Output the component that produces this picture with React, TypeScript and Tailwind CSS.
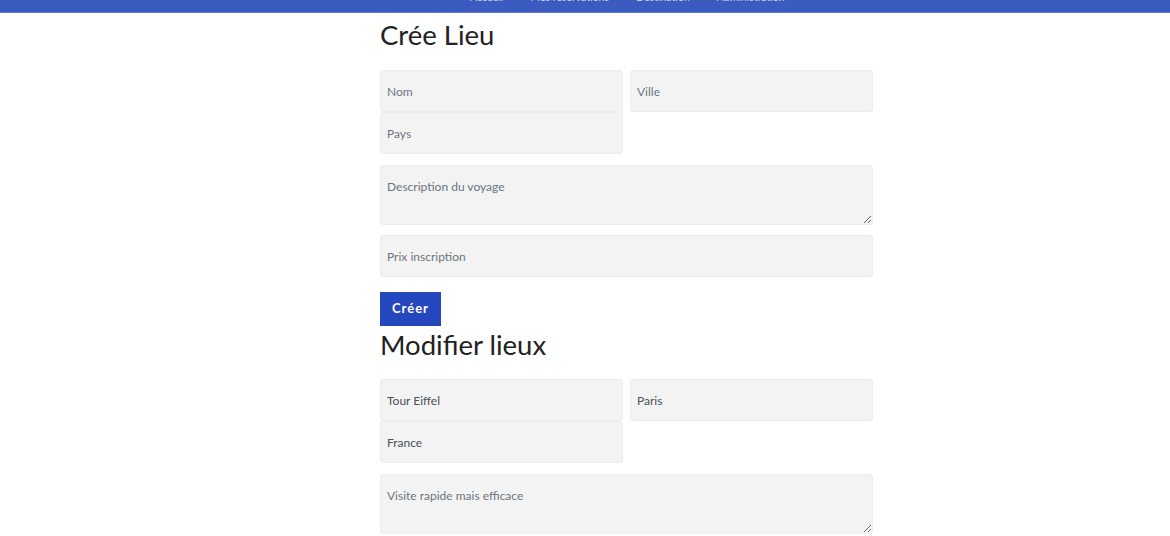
import React from "react";

const inputCls =
  "h-[42px] w-full rounded-[3px] border border-[#ececec] bg-[#f3f3f3] px-[6px] text-[12px] text-[#495057] placeholder:text-[#6c757d] outline-none";
const taCls =
  "block h-[60px] w-full resize-y rounded-[3px] border border-[#ececec] bg-[#f3f3f3] px-[6px] pt-[12px] text-[12px] text-[#495057] placeholder:text-[#6c757d] outline-none";

function Fields({ values, desc }: { values?: string[]; desc: string }) {
  const v = values ?? [];
  return (
    <div className="flex flex-col">
      <div className="grid grid-cols-2 gap-x-[7px]">
        <input className={inputCls} placeholder="Nom" defaultValue={v[0]} />
        <input className={inputCls} placeholder="Ville" defaultValue={v[1]} />
        <input className={inputCls} placeholder="Pays" defaultValue={v[2]} />
      </div>
      <textarea className={taCls + " mt-[11px]"} placeholder={desc} />
    </div>
  );
}

export default function App() {
  return (
    <div className="min-h-[536px] bg-white" style={{ fontFamily: "Lato, 'Open Sans', sans-serif" }}>
      <div className="relative h-[13px] overflow-hidden border-b border-[#5b78cc] bg-[#3a5bbf]">
        <div className="absolute left-[470px] top-[-8px] flex gap-[27px] text-[10.5px] leading-[10px] text-[#c9d3ef]">
          <span>Accueil</span>
          <span>Mes réservations</span>
          <span>Destination</span>
          <span>Administration</span>
        </div>
      </div>
      <div className="ml-[380px] w-[493px]">
        <h1 className="mt-[4px] text-[27.5px] leading-[35px] text-[#222]">Crée Lieu</h1>
        <div className="mt-[18px]">
          <Fields desc="Description du voyage" />
          <input className={inputCls + " mt-[10px]"} placeholder="Prix inscription" />
          <button className="mt-[15px] h-[34px] w-[61px] bg-[#2547be] text-[13px] font-bold tracking-[1px] text-white">
            Créer
          </button>
        </div>
        <h1 className="mt-[1px] text-[27.5px] leading-[35px] text-[#222]">Modifier lieux</h1>
        <div className="mt-[17px]">
          <Fields values={["Tour Eiffel", "Paris", "France"]} desc="Visite rapide mais efficace" />
        </div>
      </div>
    </div>
  );
}
